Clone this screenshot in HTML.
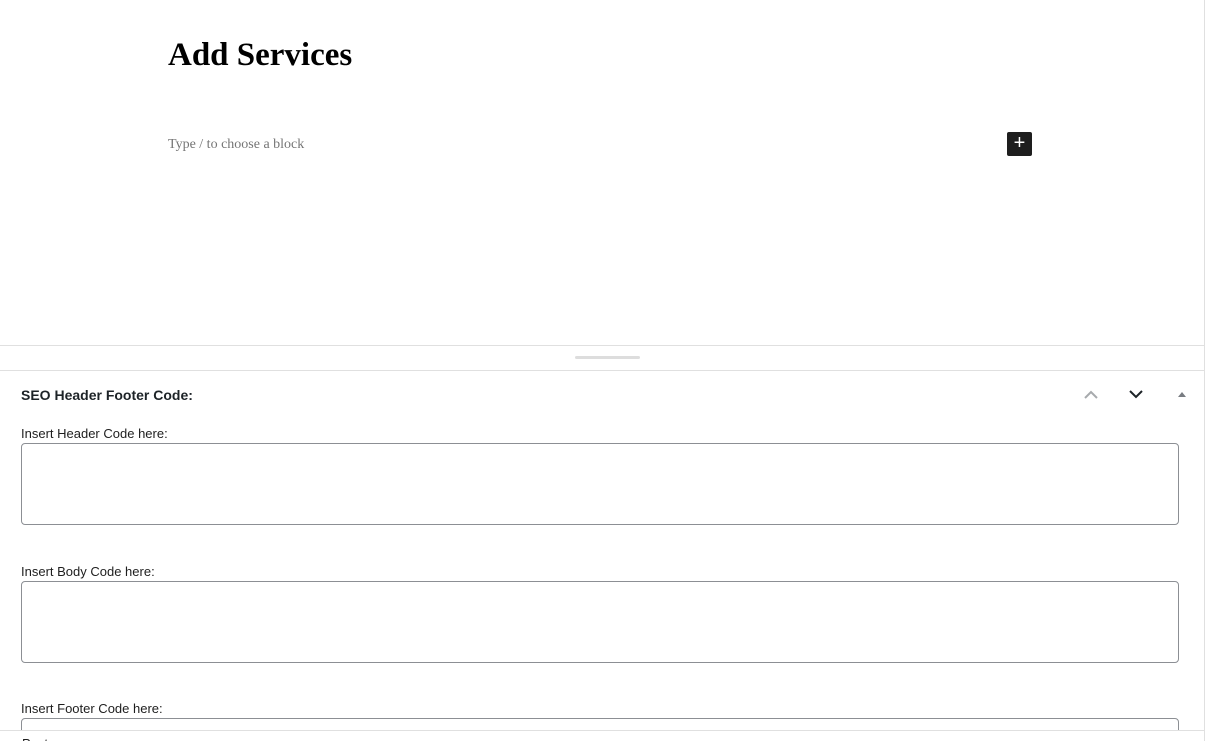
<!DOCTYPE html>
<html style="overflow:hidden;height:741px"><head><style>
body{margin:0;width:1205px;height:741px;overflow:hidden;background:#fff;position:relative;font-family:"Liberation Sans",sans-serif;color:#1e1e1e}
.a{position:absolute}
h1{position:absolute;left:168px;top:37px;margin:0;font:bold 33px "Liberation Serif",serif;color:#000}
.ph{left:168px;top:137px;font:14px "Liberation Serif",serif;color:#757575}
.plus{left:1007px;top:132px;width:25px;height:24px;background:#1e1e1e;border-radius:2px;color:#fff;text-align:center;line-height:23px;font-size:20px}
.lbl{left:21px;font-size:13px;color:#1e1e1e}
.ta{left:21px;width:1156px;border:1px solid #8c8f94;border-radius:4px;height:80px}
</style></head><body>
<div class="a" style="right:0;top:0;width:1px;height:741px;background:#e0e0e0"></div>
<h1>Add Services</h1>
<div class="a ph">Type / to choose a block</div>
<div class="a plus">+</div>
<div class="a" style="left:0;top:345px;width:1204px;height:1px;background:#e0e0e0"></div>
<div class="a" style="left:575px;top:356px;width:65px;height:3px;background:#ddd;border-radius:2px"></div>
<div class="a" style="left:0;top:370px;width:1204px;height:1px;background:#e0e0e0"></div>
<div class="a" style="left:21px;top:387px;font-size:14px;font-weight:bold;color:#1d2327">SEO Header Footer Code:</div>
<svg class="a" style="left:1083px;top:388px" width="16" height="12"><path d="M2 10l6-6 6 6" stroke="#a7aaad" stroke-width="2" fill="none"/></svg>
<svg class="a" style="left:1128px;top:388px" width="16" height="12"><path d="M2 3l6 6 6-6" stroke="#1d2327" stroke-width="2" fill="none"/></svg>
<svg class="a" style="left:1177px;top:390px" width="10" height="8"><path d="M1 7l4-5 4 5z" fill="#787c82"/></svg>
<div class="a lbl" style="top:426px">Insert Header Code here:</div>
<div class="a ta" style="top:443px"></div>
<div class="a lbl" style="top:564px">Insert Body Code here:</div>
<div class="a ta" style="top:581px"></div>
<div class="a lbl" style="top:701px">Insert Footer Code here:</div>
<div class="a ta" style="top:718px;height:20px"></div>
<div class="a" style="left:0;top:730px;width:1204px;height:10px;background:#fff;border-top:1px solid #e0e0e0;z-index:2;overflow:hidden"><div style="position:absolute;left:22px;top:5px;font-size:13px">Post</div></div>
</body></html>
